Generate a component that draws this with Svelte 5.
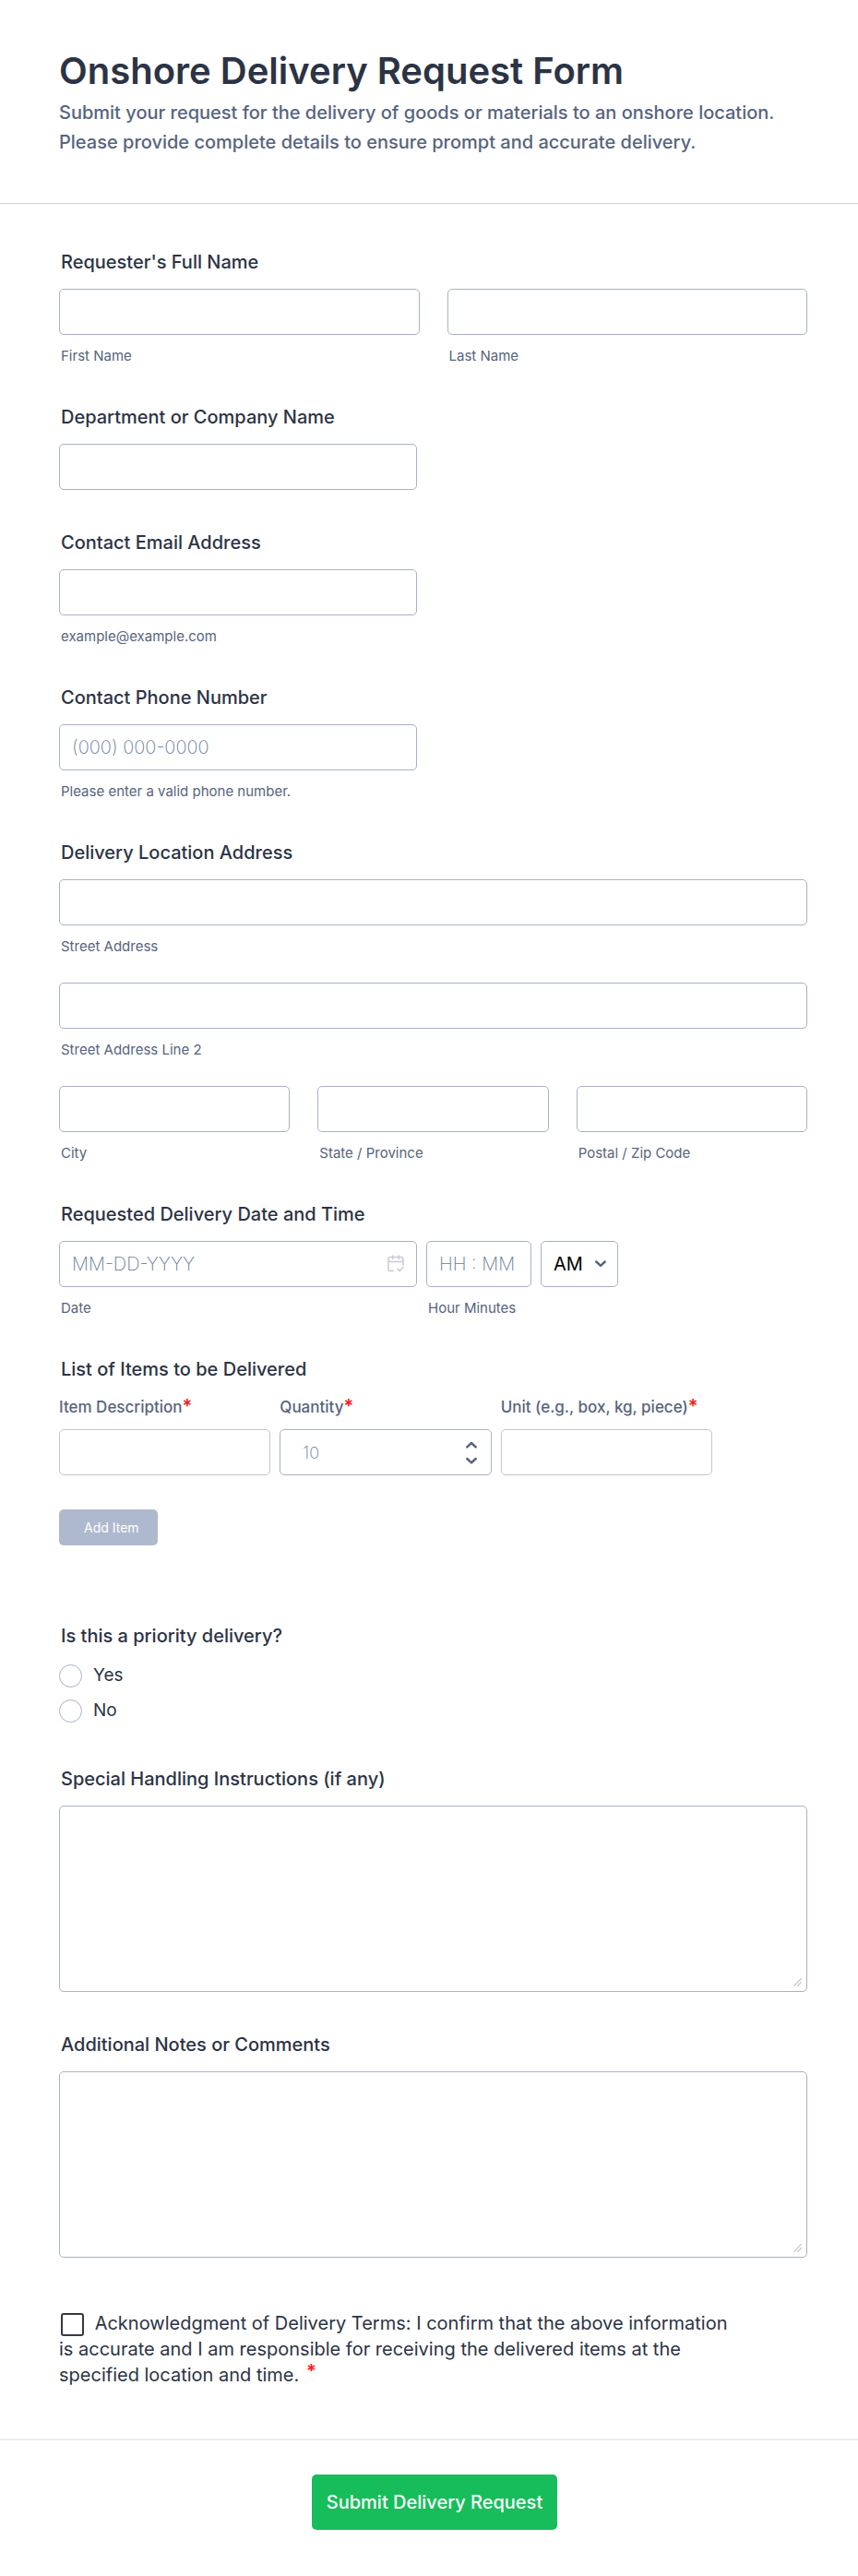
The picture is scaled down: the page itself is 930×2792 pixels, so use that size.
<script lang="ts">
  let radios = ["Yes", "No"];
  let priority = "";
  let accepted = false;
</script>

<form class="form" on:submit|preventDefault>
  <header class="header">
    <h1>Onshore Delivery Request Form</h1>
    <p>
      Submit your request for the delivery of goods or materials to an onshore location.
      Please provide complete details to ensure prompt and accurate delivery.
    </p>
  </header>

  <div class="body">
    <div class="field" role="group" aria-labelledby="name-title">
      <div class="title" id="name-title">Requester's Full Name</div>
      <div class="row">
        <div class="cell">
          <input class="box" id="first-name" type="text" />
          <label class="sub" for="first-name">First Name</label>
        </div>
        <div class="cell">
          <input class="box" id="last-name" type="text" />
          <label class="sub" for="last-name">Last Name</label>
        </div>
      </div>
    </div>

    <div class="field">
      <label class="title" for="company">Department or Company Name</label>
      <input class="box half" id="company" type="text" />
    </div>

    <div class="field">
      <label class="title" for="email">Contact Email Address</label>
      <input class="box half" id="email" type="email" />
      <label class="sub" for="email">example@example.com</label>
    </div>

    <div class="field">
      <label class="title" for="phone">Contact Phone Number</label>
      <input class="box half" id="phone" type="tel" placeholder="(000) 000-0000" />
      <label class="sub" for="phone">Please enter a valid phone number.</label>
    </div>

    <div class="field" role="group" aria-labelledby="address-title">
      <div class="title" id="address-title">Delivery Location Address</div>
      <div class="address">
        <div class="cell">
          <input class="box" id="street" type="text" />
          <label class="sub" for="street">Street Address</label>
        </div>
        <div class="cell">
          <input class="box" id="street2" type="text" />
          <label class="sub" for="street2">Street Address Line 2</label>
        </div>
        <div class="row">
          <div class="cell">
            <input class="box" id="city" type="text" />
            <label class="sub" for="city">City</label>
          </div>
          <div class="cell">
            <input class="box" id="state" type="text" />
            <label class="sub" for="state">State / Province</label>
          </div>
          <div class="cell">
            <input class="box" id="postal" type="text" />
            <label class="sub" for="postal">Postal / Zip Code</label>
          </div>
        </div>
      </div>
    </div>

    <div class="field" role="group" aria-labelledby="date-title">
      <div class="title" id="date-title">Requested Delivery Date and Time</div>
      <div class="datetime">
        <div class="cell date">
          <div class="overlay-wrap">
            <input class="box" id="date" type="text" placeholder="MM-DD-YYYY" />
            <svg class="calendar" viewBox="0 0 18 19" aria-hidden="true">
              <path d="M6.5 17.6H3.2a2.2 2.2 0 0 1-2.2-2.2V4.6a2.2 2.2 0 0 1 2.2-2.2h11.6a2.2 2.2 0 0 1 2.2 2.2V11M1 7.5h16M5.7 1v3.6M12.3 1v3.6M11 15.3l2.2 2.1 3.8-4" />
            </svg>
          </div>
          <label class="sub" for="date">Date</label>
        </div>
        <div class="cell time">
          <input class="box" id="time" type="text" placeholder="HH : MM" />
          <label class="sub" for="time">Hour Minutes</label>
        </div>
        <div class="overlay-wrap ampm">
          <select class="box" aria-label="AM or PM">
            <option>AM</option>
            <option>PM</option>
          </select>
          <svg class="chevron" viewBox="0 0 12 8" aria-hidden="true"><path d="M1.3 1.5L6 5.9l4.7-4.4" /></svg>
        </div>
      </div>
    </div>

    <div class="field items-field" role="group" aria-labelledby="items-title">
      <div class="title" id="items-title">List of Items to be Delivered</div>
      <div class="items">
        <div class="cell">
          <label class="column" for="item">Item Description<span class="required">*</span></label>
          <input class="box light" id="item" type="text" />
        </div>
        <div class="cell">
          <label class="column" for="quantity">Quantity<span class="required">*</span></label>
          <div class="overlay-wrap">
            <input class="box quantity" id="quantity" type="number" placeholder="10" />
            <svg class="spinner" viewBox="0 0 12 25" aria-hidden="true">
              <path d="M1.3 6.4L6 2l4.7 4.4M1.3 19L6 23.4l4.7-4.4" />
            </svg>
          </div>
        </div>
        <div class="cell">
          <label class="column" for="unit">Unit (e.g., box, kg, piece)<span class="required">*</span></label>
          <input class="box light" id="unit" type="text" />
        </div>
      </div>
      <button class="add-btn" type="button">Add Item</button>
    </div>

    <div class="field" role="radiogroup" aria-labelledby="priority-title">
      <div class="title" id="priority-title">Is this a priority delivery?</div>
      <div class="options">
        {#each radios as option}
          <label class="option">
            <input type="radio" name="priority" value={option} bind:group={priority} />
            {option}
          </label>
        {/each}
      </div>
    </div>

    <div class="field">
      <label class="title" for="handling">Special Handling Instructions (if any)</label>
      <div class="overlay-wrap">
        <textarea class="box area" id="handling"></textarea>
        <svg class="grip" viewBox="0 0 9 9" aria-hidden="true"><path d="M.5 8.5l8-8M4.5 8.5l4-4" /></svg>
      </div>
    </div>

    <div class="field">
      <label class="title" for="notes">Additional Notes or Comments</label>
      <div class="overlay-wrap">
        <textarea class="box area" id="notes"></textarea>
        <svg class="grip" viewBox="0 0 9 9" aria-hidden="true"><path d="M.5 8.5l8-8M4.5 8.5l4-4" /></svg>
      </div>
    </div>

    <label class="terms">
      <input type="checkbox" bind:checked={accepted} />
      Acknowledgment of Delivery Terms: I confirm that the above information is accurate and I am
      responsible for receiving the delivered items at the specified location and time.
      <span class="required">*</span>
    </label>
  </div>

  <footer class="footer">
    <button class="submit-btn" type="submit">Submit Delivery Request</button>
  </footer>
</form>

<style>
  :global(body) {
    background: #fff;
  }

  .form {
    font-family: Inter, "Liberation Sans", sans-serif;
    color: #2c3345;
    background: #fff;
  }

  .form * {
    box-sizing: border-box;
  }

  .header {
    padding: 52px 55px 50px 64px;
    border-bottom: 1px solid #cfd0dc;
  }

  h1 {
    margin: 0;
    font-size: 40px;
    font-weight: 600;
    line-height: 50px;
  }

  .header p {
    margin: 4px 0 0;
    max-width: 780px;
    font-size: 20px;
    font-weight: 500;
    line-height: 32px;
    color: #57647e;
  }

  .body {
    padding: 51px 55px 55px 64px;
  }

  .field {
    margin-bottom: 45px;
  }

  .title {
    display: block;
    margin-bottom: 16px;
    padding-left: 2px;
    font-size: 20px;
    font-weight: 500;
    line-height: 25px;
  }

  .box {
    display: block;
    width: 100%;
    height: 50px;
    margin: 0;
    padding: 0 13px;
    border: 1px solid #a9b1c5;
    border-radius: 5px;
    background: #fff;
    font-family: inherit;
    font-size: 20px;
    font-weight: 300;
    color: #2c3345;
    outline: none;
  }

  .box::placeholder {
    color: #667c99;
    font-weight: 200;
    opacity: 1;
  }

  .box:focus {
    border-color: #2e69ff;
  }

  .half {
    max-width: 388px;
  }

  .light {
    border-color: #c4c5d0;
  }

  .sub {
    display: block;
    margin-top: 13px;
    padding-left: 2px;
    font-size: 15px;
    line-height: 19px;
    color: #57647e;
  }

  .row {
    display: flex;
    gap: 30px;
  }

  .cell {
    flex: 1;
    min-width: 0;
  }

  .address {
    display: flex;
    flex-direction: column;
    gap: 30px;
  }

  .overlay-wrap {
    position: relative;
  }

  .overlay-wrap svg {
    position: absolute;
    fill: none;
    stroke: #57647e;
    stroke-width: 2.5;
    stroke-linecap: round;
    stroke-linejoin: round;
    pointer-events: none;
  }

  /* date and time */
  .datetime {
    display: flex;
    gap: 10px;
  }

  .date {
    flex: 0 1 388px;
  }

  .time {
    flex: 0 0 114px;
  }

  .ampm {
    flex: 0 0 84px;
  }

  .ampm select {
    appearance: none;
    font-weight: 400;
    color: #000;
  }

  .overlay-wrap .calendar {
    top: 15px;
    right: 14px;
    width: 18px;
    height: 19px;
    stroke: #c8cbd6;
    stroke-width: 1.5;
  }

  .overlay-wrap .chevron {
    top: 21px;
    right: 13px;
    width: 12px;
    height: 8px;
  }

  /* list of items */
  .items-field {
    margin-bottom: 86px;
  }

  .items {
    display: flex;
    gap: 10px;
    max-width: 708px;
  }

  .column {
    display: block;
    margin-bottom: 12px;
    font-size: 17px;
    font-weight: 500;
    line-height: 24px;
    color: #57647e;
    white-space: nowrap;
  }

  .required {
    color: #ff1616;
    font-size: 20px;
    font-weight: 600;
    line-height: 1;
  }

  .quantity {
    appearance: textfield;
    padding-left: 24px;
    font-size: 18px;
  }

  .quantity::-webkit-inner-spin-button {
    appearance: none;
  }

  .overlay-wrap .spinner {
    top: 13px;
    right: 16px;
    width: 12px;
    height: 25px;
  }

  .add-btn {
    display: block;
    height: 39px;
    margin-top: 37px;
    padding: 0 20px 0 27px;
    border: none;
    border-radius: 5px;
    background: #afb9ce;
    color: #fff;
    font-family: inherit;
    font-size: 14px;
    cursor: pointer;
  }

  /* priority */
  .options {
    display: flex;
    flex-direction: column;
    gap: 10px;
    margin-bottom: 48px;
  }

  .option {
    display: flex;
    align-items: center;
    gap: 12px;
    font-size: 19px;
    line-height: 28px;
  }

  .option input {
    appearance: none;
    width: 25px;
    height: 25px;
    margin: 0;
    border: 1px solid #a9b1c5;
    border-radius: 50%;
  }

  .option input:checked {
    border: 8px solid #2e69ff;
  }

  .area {
    height: 202px;
    padding: 13px;
    resize: none;
  }

  .overlay-wrap .grip {
    right: 6px;
    bottom: 6px;
    width: 9px;
    height: 9px;
    stroke: #c8c9d6;
    stroke-width: 1.3;
  }

  .terms {
    display: block;
    max-width: 730px;
    padding-top: 12px;
    font-size: 20px;
    line-height: 28px;
  }

  .terms input {
    appearance: none;
    width: 25px;
    height: 25px;
    margin: 0 6px 0 2px;
    border: 2px solid #3c3543;
    border-radius: 3px;
    vertical-align: -7px;
  }

  .terms input:checked {
    background: #2e69ff;
  }

  .terms .required {
    margin-left: 2px;
    vertical-align: 4px;
  }

  .footer {
    padding: 37px 0 48px 12px;
    border-top: 2px solid #ecedf3;
    text-align: center;
  }

  .submit-btn {
    height: 60px;
    padding: 0 16px;
    border: none;
    border-radius: 5px;
    background: #18bd5b;
    color: #fff;
    font-family: inherit;
    font-size: 20px;
    font-weight: 500;
    cursor: pointer;
  }
</style>
